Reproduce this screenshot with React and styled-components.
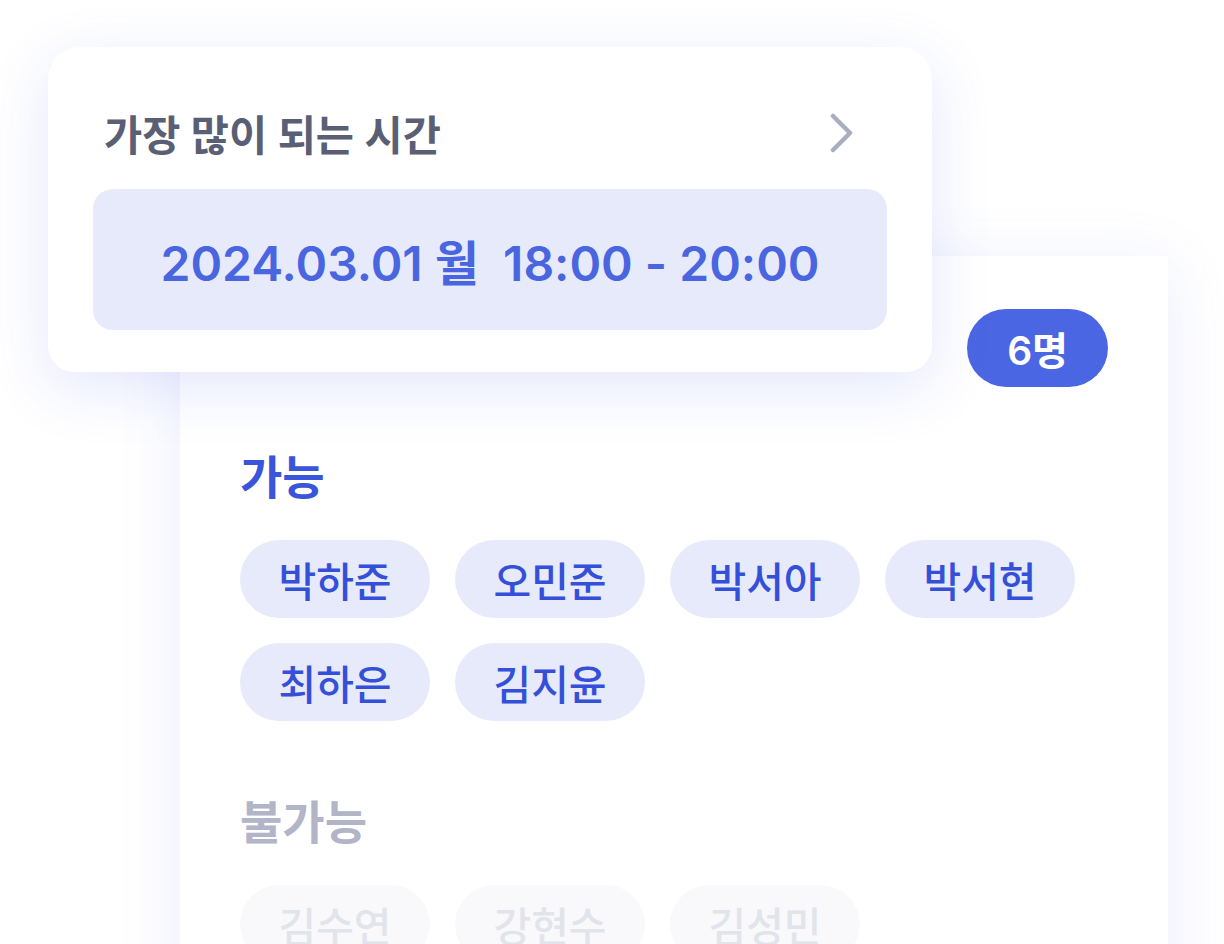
import styled, { createGlobalStyle } from "styled-components";

const GlobalStyle = createGlobalStyle`
  html, body {
    margin: 0;
    padding: 0;
    background: #ffffff;
    overflow: hidden;
  }
  body {
    font-family: "Inter", "Noto Sans CJK KR", sans-serif;
  }
`;

const available = ["박하준", "오민준", "박서아", "박서현", "최하은", "김지윤"];
const unavailable = ["김수연", "강현수", "김성민"];

export default function App() {
  return (
    <>
      <GlobalStyle />
      <Scene>
        <ListCard>
          <CountRow>
            <CountBadge>6명</CountBadge>
          </CountRow>
          <Section>
            <SectionTitle>가능</SectionTitle>
            <ChipList>
              {available.map((name) => (
                <Chip key={name}>{name}</Chip>
              ))}
            </ChipList>
          </Section>
          <Section $muted>
            <SectionTitle $muted>불가능</SectionTitle>
            <ChipList>
              {unavailable.map((name) => (
                <Chip key={name} $muted>
                  {name}
                </Chip>
              ))}
            </ChipList>
          </Section>
        </ListCard>

        <BestTimeCard>
          <CardHeader>
            <HeaderTitle>가장 많이 되는 시간</HeaderTitle>
            <svg width="28" height="40" viewBox="0 0 28 40" fill="none">
              <path
                d="M6 3 L23 20 L6 37"
                stroke="#a9adc0"
                strokeWidth="4.5"
                strokeLinecap="round"
                strokeLinejoin="round"
              />
            </svg>
          </CardHeader>
          <TimeBox>2024.03.01 월&nbsp;&nbsp;18:00 - 20:00</TimeBox>
        </BestTimeCard>
      </Scene>
    </>
  );
}

const Scene = styled.div`
  position: relative;
  width: 1224px;
  height: 944px;
  overflow: hidden;
  padding: 256px 0 0 180px;
  box-sizing: border-box;
`;

const ListCard = styled.div`
  width: 988px;
  height: 760px;
  background: #ffffff;
  box-sizing: border-box;
  padding: 53px 60px;
  box-shadow: 0 10px 60px rgba(90, 105, 235, 0.12);
`;

const CountRow = styled.div`
  display: flex;
  justify-content: flex-end;
`;

const CountBadge = styled.div`
  height: 78px;
  padding: 0 40px;
  border-radius: 39px;
  background: #4b66e3;
  color: #ffffff;
  font-size: 39px;
  font-weight: 600;
  display: flex;
  align-items: center;
  justify-content: center;
`;

const Section = styled.div`
  margin-top: ${(p) => (p.$muted ? "77px" : "66px")};
`;

const SectionTitle = styled.div`
  font-size: 46px;
  font-weight: 600;
  line-height: 48px;
  color: ${(p) => (p.$muted ? "#b1b5c7" : "#3a55d9")};
`;

const ChipList = styled.div`
  margin-top: 39px;
  display: flex;
  flex-wrap: wrap;
  gap: 25px;
  width: 840px;
`;

const Chip = styled.div`
  width: 190px;
  height: 78px;
  border-radius: 39px;
  background: ${(p) => (p.$muted ? "#f9f9fb" : "#e7eafb")};
  color: ${(p) => (p.$muted ? "#e2e4eb" : "#3550d8")};
  font-size: 41px;
  font-weight: 500;
  display: flex;
  align-items: center;
  justify-content: center;
`;

const BestTimeCard = styled.div`
  position: absolute;
  left: 48px;
  top: 47px;
  width: 884px;
  box-sizing: border-box;
  padding: 0 45px 42px;
  background: #ffffff;
  border-radius: 32px 32px 26px 26px;
  box-shadow: 0 16px 60px rgba(90, 105, 235, 0.16);
`;

const CardHeader = styled.div`
  height: 142px;
  box-sizing: border-box;
  padding: 29px 32px 0 11px;
  display: flex;
  align-items: center;
  justify-content: space-between;
`;

const HeaderTitle = styled.div`
  font-size: 41.5px;
  font-weight: 600;
  color: #5a5f75;
`;

const TimeBox = styled.div`
  height: 141px;
  border-radius: 20px;
  background: #e7eafb;
  color: #4a65e0;
  font-size: 48px;
  font-weight: 600;
  display: flex;
  align-items: center;
  justify-content: center;
`;
